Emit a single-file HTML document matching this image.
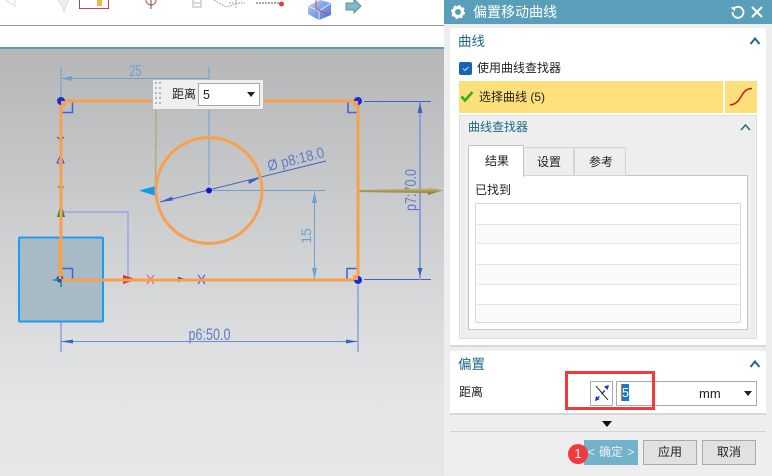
<!DOCTYPE html>
<html><head><meta charset="utf-8">
<style>
html,body{margin:0;padding:0;background:#fff}
#r{position:relative;width:772px;height:476px;overflow:hidden;font-family:"Liberation Sans","Noto Sans CJK SC",sans-serif;font-size:12px;color:#222;background:#fff}
.a{position:absolute;box-sizing:border-box;white-space:nowrap}
.t{line-height:16px}
.h{color:#1c6a88;font-size:13.5px;line-height:18px}
</style></head><body><div id="r">
<svg class="a" style="left:0;top:0" width="445" height="476" viewBox="0 0 445 476">
<defs><linearGradient id="g" x1="0" y1="0" x2="0" y2="1"><stop offset="0" stop-color="#b5b6b8"/><stop offset=".45" stop-color="#cfd0d2"/><stop offset=".8" stop-color="#e3e4e6"/><stop offset="1" stop-color="#e6e7e9"/></linearGradient>
<linearGradient id="cube" x1="0" y1="0" x2="1" y2="1"><stop offset="0" stop-color="#b5d6f2"/><stop offset="1" stop-color="#3f6fe0"/></linearGradient>
<linearGradient id="gold" x1="0" y1="0" x2="0" y2="1"><stop offset="0" stop-color="#d8c67c"/><stop offset="1" stop-color="#7c6c34"/></linearGradient></defs>
<rect width="445" height="476" fill="#fff"/>
<rect x="0" y="25" width="445" height="1" fill="#8c9a9c"/>
<rect x="0" y="47" width="445" height="2" fill="#5a9fba"/>
<rect x="0" y="49" width="445" height="427" fill="url(#g)"/>
<!-- toolbar icons -->
<path d="M5 0L15 6V0M15 6V0" fill="none" stroke="#ddd"/>
<path d="M58 0L63 8V11H65V8L69 0" fill="#eee" stroke="#ddd"/>
<rect x="79.500" y="-2" width="29" height="10.500" fill="#fff" stroke="#c8404c"/>
<rect x="97" y="0" width="5" height="6" fill="#e8b84c"/>
<circle cx="151" cy="0" r="5" fill="none" stroke="#d84a4a"/><path d="M151 0V9" stroke="#555"/>
<path d="M193 0V7H201V0M193 3H201" fill="none" stroke="#ccc" stroke-width="1.500"/>
<path d="M214 0L226 7L240 3M236 0V9M229 3H245" fill="none" stroke="#aaa" stroke-dasharray="2 1"/>
<path d="M256 3H281" stroke="#555" stroke-dasharray="2 1"/><circle cx="281.500" cy="4" r="2.500" fill="#e03c3c"/>
<path d="M308 6L320 0L331 3V15L319 20L308 14Z" fill="url(#cube)"/><path d="M308 6L319 11L331 3M319 11V20" stroke="#d8e8f8" fill="none"/><path d="M316 0V9L328 14" stroke="#e04858" fill="none"/>
<path d="M346 3H354V-1L361 6L354 13V10H346Z" fill="#7cbcc4" stroke="#5f8f9f"/>
<!-- light construction dims -->
<g fill="none" stroke="#6ea0d4">
<path d="M61 67V101M209 67V185M61 78.500H209"/>
<path d="M213 190.500H326M314.500 190.500V280"/>
</g>
<path d="M61 78.500L72 76V81Z" fill="#6ea0d4"/>
<path d="M314.500 192L312 203H317ZM314.500 279L312 268H317Z" fill="#6ea0d4"/>
<text x="135.500" y="76" font-family="Liberation Sans" font-size="16" fill="#6ea0d4" text-anchor="middle" textLength="12" lengthAdjust="spacingAndGlyphs">25</text>
<text transform="translate(311,236) rotate(-90)" font-family="Liberation Sans" font-size="14" fill="#6ea0d4" text-anchor="middle">15</text>
<!-- blue dims -->
<path d="M61 280V352M358 285V352" fill="none" stroke="#8b9fd8" stroke-width="1.500"/>
<path d="M61 341.500H358" fill="none" stroke="#6f8ed0" stroke-width="1"/>
<path d="M61 341.500L73 339.500V343.500ZM358 341.500L346 339.500V343.500Z" fill="#3c62c8"/>
<text x="209.500" y="340" font-family="Liberation Sans" font-size="16.500" fill="#5f7cc8" text-anchor="middle" textLength="42" lengthAdjust="spacingAndGlyphs">p6:50.0</text>
<path d="M364 101.500H431M364 279.500H431" stroke="#3f64c0"/>
<path d="M420 102V280" stroke="#8b9fd8" stroke-width="2"/>
<path d="M420 103L417.500 113H422.500ZM420 276L417.500 268H422.500Z" fill="#3c62c8"/>
<text transform="translate(416,190) rotate(-90)" font-family="Liberation Sans" font-size="16" fill="#5f7cc8" text-anchor="middle" textLength="42" lengthAdjust="spacingAndGlyphs">p7:70.0</text>
<!-- circle dim -->
<path d="M160 202L326 161" stroke="#3f64c0"/>
<path d="M160 202L172 196.500L173 200.500ZM260 178L248 180L249 184Z" fill="#3c62c8"/>
<text transform="translate(297,164) rotate(-14)" font-family="Liberation Sans" font-size="15" fill="#5f7cc8" text-anchor="middle" textLength="58" lengthAdjust="spacingAndGlyphs">Ø p8:18.0</text>
<!-- offset small square -->
<rect x="19" y="237.500" width="84" height="84" rx="1" fill="#a9bac7" stroke="#1a9cf4" stroke-width="2"/>
<path d="M61 212H128V280" fill="none" stroke="#9da3ee" stroke-width="1.500"/>
<path d="M156 110L155.500 188" stroke="#b4aa80" stroke-width="1.500"/>
<!-- right angles -->
<path d="M62 112.500H72.500V102M348 102V112.500H358" fill="none" stroke="#3a64d8" stroke-width="1.500"/>
<path d="M62 268.500H72.500V279M347 279V268.500H358" fill="none" stroke="#3a64d8" stroke-width="1.500"/>
<!-- arrow markers -->
<path d="M57 137L60.500 140L64 137M57 163L60.500 155L64 163Z" fill="none" stroke="#4848e0"/>
<path d="M58 186L61 190L64 186" fill="none" stroke="#60a040"/>
<path d="M57 217L61 203L65 217Z" fill="#2c8a2c"/>
<path d="M139 190.500L156 186V196Z" fill="#0c9cf0"/>
<path d="M358 190L428 188.500L428 187L443 190.500L428 195L428 193L358 192Z" fill="url(#gold)"/>
<path d="M123 275L137 279.500L123 284Z" fill="#d43a30"/>
<path d="M61 280H137" stroke="#888" stroke-width="3"/>
<path d="M147 275L154 284M154 275L147 284" stroke="#e05050"/>
<path d="M178 277L188 279.500L178 282Z" fill="#1818a0"/>
<path d="M198 275L205 284M205 275L198 284" stroke="#3c3ce0"/>
<path d="M205 279.500H219" stroke="#999"/>
<!-- geometry -->
<circle cx="209" cy="190.500" r="53" fill="none" stroke="#f8a04c" stroke-width="3"/>
<rect x="61" y="101" width="297" height="179" fill="none" stroke="#f8a04c" stroke-width="3"/>
<circle cx="61" cy="101" r="4" fill="#1c2cd8"/><path d="M61 101H66V106H61Z" fill="#f8a04c"/>
<circle cx="358" cy="101" r="4" fill="#1c2cd8"/><path d="M358 101H353V106H358Z" fill="#f8a04c"/>
<circle cx="358" cy="280" r="4" fill="#1c2cd8"/><path d="M358 280H353V275H358Z" fill="#f8a04c"/>
<circle cx="60" cy="279" r="3.500" fill="#1c2cd8"/><path d="M53 280H60M61 281V287" stroke="#109090" stroke-width="1.500"/><path d="M61.500 278.500H100V281.500H61.500Z" fill="#f8a04c"/><path d="M60 240V279" stroke="#f8a04c" stroke-width="3"/>
<circle cx="209" cy="190.500" r="3" fill="#1414e0"/>
</svg>
<!-- float -->
<div class="a" style="left:152px;top:79px;width:112px;height:31px;background:#efefef;border:1px solid #bbb"></div>
<svg class="a" style="left:154px;top:81px" width="8" height="25"><g fill="#b4b4b4"><rect x="1" y="1" width="2" height="2"/><rect x="5" y="1" width="2" height="2"/><rect x="1" y="6" width="2" height="2"/><rect x="5" y="6" width="2" height="2"/><rect x="1" y="11" width="2" height="2"/><rect x="5" y="11" width="2" height="2"/><rect x="1" y="16" width="2" height="2"/><rect x="5" y="16" width="2" height="2"/><rect x="1" y="21" width="2" height="2"/><rect x="5" y="21" width="2" height="2"/></g></svg>
<div class="a t" style="left:172px;top:86px">距离</div>
<div class="a" style="left:198px;top:83px;width:62px;height:23px;background:#fff;border:1px solid #aaa"></div>
<div class="a t" style="left:203px;top:87px;font-size:12.500px">5</div>
<svg class="a" style="left:247px;top:92px" width="10" height="6"><path d="M0 0H8L4 5Z" fill="#222"/></svg>
<!-- panel -->
<div class="a" style="left:444px;top:0;width:328px;height:476px;background:#eee"></div>
<div class="a" style="left:444px;top:0;width:328px;height:24px;background:#5a9fba"></div>
<svg class="a" style="left:450px;top:3px" width="18" height="18" viewBox="0 0 18 18"><circle cx="8" cy="9" r="4.500" fill="none" stroke="#fff" stroke-width="3"/><circle cx="8" cy="9" r="6" fill="none" stroke="#fff" stroke-width="2" stroke-dasharray="2.500 2.200"/></svg>
<div class="a" style="left:473px;top:3px;color:#fff;font-size:14px;line-height:18px">偏置移动曲线</div>
<svg class="a" style="left:729px;top:4px" width="38" height="16" viewBox="0 0 38 16"><path d="M5 4.500A5.500 5.500 0 1 1 3.500 8" fill="none" stroke="#fff" stroke-width="1.800"/><path d="M1.500 3.500L6 3V7.500Z" fill="#fff"/><path d="M23 3L33 13M33 3L23 13" stroke="#fff" stroke-width="2"/></svg>
<!-- section 1 -->
<div class="a" style="left:450px;top:28px;width:316px;height:319px;background:#fff;border-bottom:2px solid #d8d8d8"></div>
<div class="a h" style="left:458px;top:33px">曲线</div>
<svg class="a" style="left:749px;top:36px" width="14" height="10"><path d="M1.500 8L6 2.500L10.500 8" fill="none" stroke="#1c6a88" stroke-width="2"/></svg>
<svg class="a" style="left:459px;top:62px" width="13" height="13"><rect width="13" height="13" rx="2" fill="#1464b8"/><path d="M4 6.500L6 8.500L9.500 5" fill="none" stroke="#bcd8f0"/></svg>
<div class="a t" style="left:477px;top:60px">使用曲线查找器</div>
<div class="a" style="left:459px;top:81px;width:264px;height:32px;background:#fde07a"></div>
<div class="a" style="left:725px;top:81px;width:32px;height:32px;background:#fde07a"></div>
<svg class="a" style="left:460px;top:90px" width="14" height="13"><path d="M1.500 6.500L5 10.500L12.500 2" fill="none" stroke="#28b428" stroke-width="2.600"/></svg>
<div class="a t" style="left:479px;top:89px">选择曲线 (5)</div>
<svg class="a" style="left:728px;top:84px" width="26" height="26"><path d="M2 21C9 20 11 16 14 11C16.500 7 19 4.500 24 4.500" fill="none" stroke="#c41818" stroke-width="1.500"/></svg>
<!-- finder -->
<div class="a" style="left:459px;top:115px;width:298px;height:224px;background:#eee;border:1px solid #dcdcdc"></div>
<div class="a" style="left:468px;top:119px;color:#1c6a88;line-height:16px;font-size:12px">曲线查找器</div>
<svg class="a" style="left:740px;top:123px" width="12" height="8"><path d="M1 7L5.500 2L10 7" fill="none" stroke="#1c6a88" stroke-width="1.500"/></svg>
<div class="a" style="left:468px;top:175px;width:280px;height:155px;background:#fff;border:1px solid #c4c4c4"></div>
<div class="a" style="left:524px;top:147px;width:50px;height:29px;background:#eee;border:1px solid #d4d4d4;border-left:none"></div>
<div class="a" style="left:574px;top:147px;width:52px;height:29px;background:#eee;border:1px solid #d4d4d4;border-left:1px solid #d4d4d4"></div>
<div class="a" style="left:468px;top:145px;width:56px;height:32px;background:#fff;border:1px solid #c4c4c4;border-bottom:none"></div>
<div class="a t" style="left:485px;top:153px">结果</div>
<div class="a t" style="left:537px;top:154px">设置</div>
<div class="a t" style="left:589px;top:154px">参考</div>
<div class="a t" style="left:475px;top:182px">已找到</div>
<div class="a" style="left:475px;top:203px;width:266px;height:120px;background:#fff;border:1px solid #d8d8d8"></div>
<div class="a" style="left:477px;top:224px;width:262px;height:20px;background:#fafafa;border-top:1px solid #e6e6e6;border-bottom:1px solid #e6e6e6"></div>
<div class="a" style="left:477px;top:264px;width:262px;height:21px;background:#fafafa;border-top:1px solid #e6e6e6;border-bottom:1px solid #e6e6e6"></div>
<div class="a" style="left:477px;top:304px;width:262px;height:18px;background:#fafafa;border-top:1px solid #e6e6e6"></div>
<!-- section 2 -->
<div class="a" style="left:450px;top:351px;width:316px;height:64px;background:#fff;border-bottom:2px solid #d8d8d8"></div>
<div class="a h" style="left:458px;top:356px">偏置</div>
<svg class="a" style="left:749px;top:359px" width="14" height="10"><path d="M1.500 8L6 2.500L10.500 8" fill="none" stroke="#1c6a88" stroke-width="2"/></svg>
<div class="a t" style="left:459px;top:384px">距离</div>
<div class="a" style="left:590px;top:381px;width:23px;height:25px;background:#fff;border:1px solid #aaa"></div>
<svg class="a" style="left:591px;top:382px" width="21" height="23"><path d="M5 4L17 18" stroke="#333"/><path d="M5 18L17 5" stroke="#2040c0" stroke-width="1.500" stroke-dasharray="5 3"/><path d="M18 3L13 4.500L16.500 8ZM4 19L5 14L8.500 17.500Z" fill="#1c34c0"/></svg>
<div class="a" style="left:616px;top:381px;width:141px;height:25px;background:#fff;border:1px solid #aaa"></div>
<div class="a" style="left:621px;top:384px;width:8px;height:17px;background:#1a78d4;border-left:1px solid #e87820"></div>
<div class="a t" style="left:622px;top:385px;color:#fff;font-size:12.500px">5</div>
<div class="a t" style="left:699px;top:386px;font-size:13px">mm</div>
<svg class="a" style="left:744px;top:391px" width="10" height="6"><path d="M0 0H8L4 5Z" fill="#222"/></svg>
<div class="a" style="left:565px;top:371px;width:90px;height:39px;border:3px solid #f4393c"></div>
<svg class="a" style="left:601px;top:421px" width="12" height="7"><path d="M1 0H11L6 6Z" fill="#111"/></svg>
<div class="a" style="left:450px;top:431px;width:316px;height:1px;background:#d4d4d4"></div>
<!-- buttons -->
<div class="a" style="left:584px;top:440px;width:54px;height:25px;background:#73b3c9;color:#eef;text-align:center;line-height:25px;font-size:12px;word-spacing:1px">&lt; 确定 &gt;</div>
<div class="a" style="left:643px;top:440px;width:54px;height:25px;background:#e1e1e1;border:1px solid #aaa;text-align:center;line-height:23px;font-size:12px">应用</div>
<div class="a" style="left:702px;top:440px;width:54px;height:25px;background:#e1e1e1;border:1px solid #aaa;text-align:center;line-height:23px;font-size:12px">取消</div>
<div class="a" style="left:568px;top:444px;width:20px;height:20px;border-radius:50%;background:#f4393c;color:#fff;text-align:center;line-height:20px;font-size:13px">1</div>
</div></body></html>
